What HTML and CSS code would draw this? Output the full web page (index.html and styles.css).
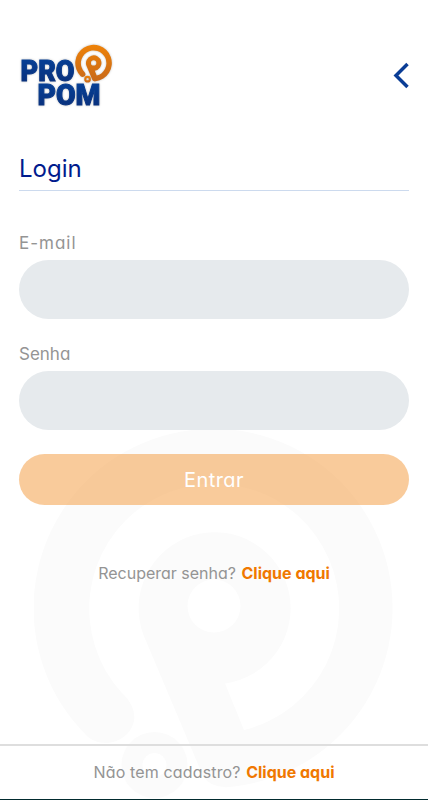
FILE: index.html
```
<!DOCTYPE html>
<html lang="pt-BR">
<head>
  <meta charset="UTF-8">
  <meta name="viewport" content="width=device-width, initial-scale=1">
  <title>Login</title>
  <link rel="stylesheet" href="styles.css">
</head>
<body>
<svg class="watermark" viewBox="34 428 362 372" aria-hidden="true">
  <g id="pin">
    <path fill-rule="evenodd" d="M87 736A179.5 179.5 0 1 1 234 786.500Q212 790 203 776L143.500 635A76 76 0 1 1 225 683.500L244 730A125 125 0 1 0 122 693C134 704 137 717 132 727C124 744 100 748 87 736ZM187.500 606a26.500 26.500 0 1 0 53 0a26.500 26.500 0 1 0-53 0Z"/>
    <path fill-rule="evenodd" d="M121.500 765a33 33 0 1 0 66 0a33 33 0 1 0-66 0ZM142.500 765a12 12 0 1 0 24 0a12 12 0 1 0-24 0Z"/>
  </g>
</svg>

<header class="header">
  <svg class="logo" viewBox="0 0 100 70" role="img" aria-label="PROPOM">
    <defs>
      <linearGradient id="orange" x1="0" y1="0" x2="0" y2="1">
        <stop offset="0" stop-color="#ee8208"/>
        <stop offset="1" stop-color="#c8691a"/>
      </linearGradient>
      <linearGradient id="blue" x1="0" y1="0" x2="0" y2="1">
        <stop offset="0" stop-color="#06439b"/>
        <stop offset="1" stop-color="#092d77"/>
      </linearGradient>
    </defs>
    <g class="logo-text" fill="url(#blue)" stroke="url(#blue)">
      <text x="1.500" y="39.500" textLength="54" lengthAdjust="spacingAndGlyphs">PRO</text>
      <text x="18.500" y="64" textLength="63" lengthAdjust="spacingAndGlyphs">POM</text>
    </g>
    <use class="logo-pin" href="#pin" fill="url(#orange)" transform="translate(52.800 -39.900) scale(.102)"/>
  </svg>
  <a class="back" href="#" aria-label="Voltar">
    <svg viewBox="0 0 18 28"><path d="M15.500 3L4 14.500L15.500 26"/></svg>
  </a>
</header>

<main class="content">
  <h1>Login</h1>
  <form>
    <label for="email">E-mail</label>
    <input id="email" type="email">
    <label for="senha">Senha</label>
    <input id="senha" type="password">
    <button type="button">Entrar</button>
  </form>
  <p class="recover"><span class="question">Recuperar senha?</span> <a href="#">Clique aqui</a></p>
</main>

<footer class="footer"><span class="question">Não tem cadastro?</span> <a href="#">Clique aqui</a></footer>
</body>
</html>
```
FILE: styles.css
```
* {
  box-sizing: border-box;
}

html, body {
  margin: 0;
  height: 100%;
}

body {
  display: flex;
  flex-direction: column;
  overflow: hidden;
  background: #fff;
  border-bottom: 1px solid #022b2f;
  color: #949494;
  font: 16px "Inter", sans-serif;
  font-feature-settings: "cv11", "ss03";
}

/* sits behind the form */
.watermark {
  position: absolute;
  z-index: -1;
  left: 34px;
  bottom: 0;
  width: 362px;
  height: 372px;
  fill: #fbfbfb;
}

.header {
  display: flex;
  justify-content: space-between;
  align-items: flex-start;
  padding: 41px 18px 0 19px;
}

.logo {
  width: 100px;
  height: 70px;
  filter: drop-shadow(0 0 1px rgba(0, 0, 0, .25));
}

.logo-text {
  font: 900 29px "Roboto", sans-serif;
  stroke-width: 1px;
}

.back {
  margin-top: 20px;
}

.back svg {
  display: block;
  width: 18px;
  height: 28px;
  fill: none;
  stroke: #0a3d96;
  stroke-width: 3.500px;
}

.content {
  flex: 1;
  padding: 40px 19px 0;
}

h1 {
  height: 40px;
  margin: 0 0 40px;
  border-bottom: 1px solid #ccdaee;
  color: #001b8d;
  font-size: 24px;
  font-weight: 400;
  line-height: 36px;
}

form {
  display: flex;
  flex-direction: column;
}

label {
  margin-bottom: 5px;
  font-size: 17px;
  line-height: 24px;
}

label[for="email"] {
  letter-spacing: 1px;
}

input {
  height: 59px;
  margin: 0 0 23px;
  border: 0;
  border-radius: 30px;
  padding: 0 24px;
  background: #e6eaed;
  font: inherit;
}

button {
  height: 51px;
  margin-top: 1px;
  border: 0;
  border-radius: 26px;
  padding: 0;
  background: rgba(241, 135, 23, .43);
  color: #fff;
  font: inherit;
  font-size: 20px;
  font-feature-settings: inherit;
  letter-spacing: .4px;
}

.recover {
  margin: 56px 0 0;
  line-height: 25px;
  text-align: center;
}

.question {
  margin-right: 1px;
}

a {
  color: #f07800;
  font-weight: 700;
  text-decoration: none;
}

.footer {
  height: 55px;
  border-top: 2px solid #dedede;
  line-height: 52px;
  text-align: center;
}

.footer .question {
  letter-spacing: .15px;
}
```
